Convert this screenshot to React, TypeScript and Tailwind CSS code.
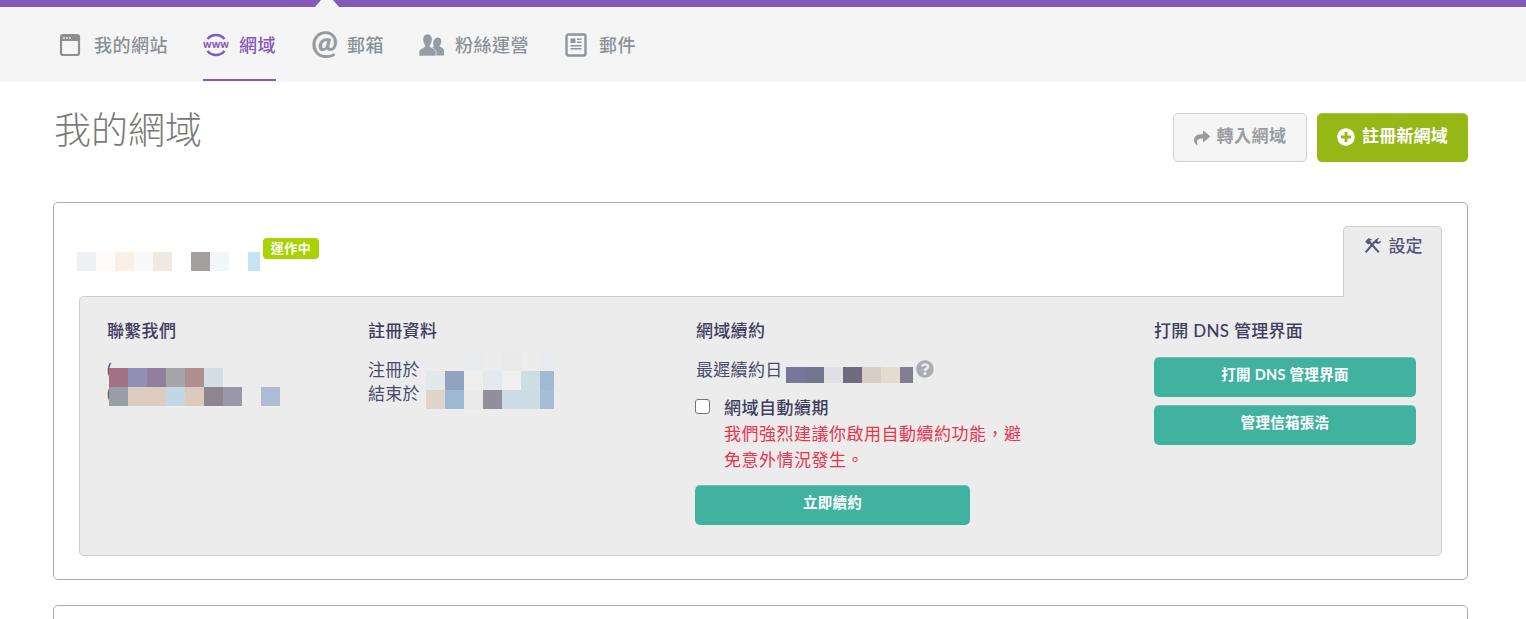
import React from "react";
import { FaShare, FaPlusCircle, FaQuestionCircle } from "react-icons/fa";

const FONT = { fontFamily: '"Lato","Noto Sans CJK TC","Noto Sans",sans-serif' };

function Mosaic({ colors, w = 19, h = 19, lastW }: { colors: (string | null)[]; w?: number; h?: number; lastW?: number }) {
  return (
    <div className="flex">
      {colors.map((c, i) => (
        <div key={i} style={{ width: i === colors.length - 1 && lastW ? lastW : w, height: h, background: c ?? "transparent" }} />
      ))}
    </div>
  );
}

function WindowIcon() {
  return (
    <svg width="22" height="24" viewBox="0 0 22 24" className="shrink-0">
      <rect x="2" y="2" width="18" height="20" rx="2" fill="none" stroke="#8f8f8f" strokeWidth="2.2" />
      <rect x="2" y="2" width="18" height="6" rx="1.5" fill="#8f8f8f" />
      <circle cx="5" cy="5" r="0.9" fill="#f5f5f5" />
      <circle cx="8" cy="5" r="0.9" fill="#f5f5f5" />
      <circle cx="11" cy="5" r="0.9" fill="#f5f5f5" />
    </svg>
  );
}

function WwwIcon() {
  return (
    <svg width="26" height="26" viewBox="0 0 26 26" className="shrink-0">
      <path d="M4.500 7 A11 11 0 0 1 21.500 7" fill="none" stroke="#8459b8" strokeWidth="2.400" />
      <path d="M4.500 19 A11 11 0 0 0 21.500 19" fill="none" stroke="#8459b8" strokeWidth="2.400" />
      <text x="13" y="16" textAnchor="middle" fontSize="11" fontWeight="900" textLength="26" lengthAdjust="spacingAndGlyphs" fill="#8459b8" fontFamily="Lato, sans-serif">www</text>
    </svg>
  );
}

function PeopleIcon() {
  return (
    <svg width="25" height="24" viewBox="0 0 25 24" className="shrink-0">
      <path d="M19 4.500c2 0 3.300 1.700 3.300 3.900 0 1.700-.7 3.100-1.600 4 0 .9.300 1.300 1.300 1.800 1.600.8 2.900 1.500 3 3v5.300h-8.500v-3.500c0-2-1.400-3-3-3.800 0-1 .8-1.300 1.300-2.100-.5-1-.7-1.800-.7-2.800 0-3.100 2.600-5.800 4.900-5.800z" fill="#979ca3" />
      <path d="M8.500 1c2.800 0 4.600 2.400 4.600 5.500 0 2.500-.9 4.600-2.100 5.800 0 1.300.4 1.900 1.800 2.500 2.200 1 4.200 2 4.200 4.200v4H0v-4c0-2.200 2-3.200 4.200-4.200 1.400-.6 1.800-1.200 1.800-2.500-1.200-1.200-2.100-3.300-2.100-5.800 0-3.100 1.800-5.500 4.600-5.500z" fill="#979ca3" stroke="#f5f5f5" strokeWidth="0.6" />
    </svg>
  );
}

function NewsIcon() {
  return (
    <svg width="22" height="24" viewBox="0 0 22 24" className="shrink-0">
      <rect x="1.500" y="1.500" width="19" height="21" rx="2" fill="none" stroke="#8e949b" strokeWidth="2.400" />
      <rect x="5.500" y="5.500" width="5" height="4.500" fill="#8e949b" />
      <rect x="12" y="5.500" width="4.500" height="1.500" fill="#8e949b" />
      <rect x="12" y="8.500" width="4.500" height="1.500" fill="#8e949b" />
      <rect x="5.500" y="12" width="11" height="1.500" fill="#8e949b" />
      <rect x="5.500" y="15" width="11" height="1.500" fill="#8e949b" />
    </svg>
  );
}

function ToolsIcon() {
  return (
    <svg width="19" height="17" viewBox="0 0 18 16" className="shrink-0">
      <path d="M2.500 14.500 L11.500 4" stroke="#56557a" strokeWidth="2" fill="none" />
      <path d="M11.500 5.500 C10.500 3 12.500 .8 15.500 1.200 L13.500 3 L14.500 4.700 L17 3.500 C17.200 6 14.500 7.500 11.500 5.500z" fill="#56557a" />
      <path d="M15 14.500 L6 4.500" stroke="#56557a" strokeWidth="2" fill="none" />
      <path d="M2 4.200 L5.500 .8 L9 2.800 L6.500 3.300 L7 5.500 L5 7z" fill="#56557a" />
    </svg>
  );
}

function NavItem({ icon, label, active, gap }: { icon: React.ReactNode; label: string; active?: boolean; gap: string }) {
  return (
    <div className={`flex h-[74px] items-center border-b-2 pt-[4px] ${gap} ${active ? "border-[#8459b8] text-[#8459b8]" : "border-transparent text-[#8b9096]"}`}>
      {icon}
      <span className="text-[18px] font-medium tracking-[0.5px]">{label}</span>
    </div>
  );
}

function TealButton({ children, className = "" }: { children: React.ReactNode; className?: string }) {
  return (
    <button className={`flex h-10 items-center justify-center rounded-[5px] bg-[#41b1a0] pb-[4px] text-[14.5px] font-bold text-white shadow-[inset_0_1px_0_rgba(255,255,255,0.25)] ${className}`}>
      {children}
    </button>
  );
}

const H3 = "text-[17px] font-medium text-[#3f3e60]";

export default function App() {
  return (
    <div lang="zh-Hant" style={FONT} className="h-[619px] overflow-hidden bg-white">
      <div className="relative h-[7px] bg-[#8459b8]">
        <svg width="26" height="7" viewBox="0 0 26 7" className="absolute left-[314px] top-0">
          <polygon points="7,0 19,0 25,7 1,7" fill="#f5f5f5" />
        </svg>
      </div>

      <nav className="flex h-[75px] items-start gap-[35px] bg-[#f5f5f5] pl-[59px]">
        <NavItem icon={<WindowIcon />} label="我的網站" gap="gap-[13px]" />
        <NavItem icon={<WwwIcon />} label="網域" active gap="gap-[10px]" />
        <NavItem
          icon={<span className="mt-[-6px] w-[26px] text-center text-[32px] font-black leading-none text-[#979ca3]">@</span>}
          label="郵箱"
          gap="gap-[10px]"
        />
        <NavItem icon={<PeopleIcon />} label="粉絲運營" gap="gap-[11px]" />
        <div className="ml-[1px]">
          <NavItem icon={<NewsIcon />} label="郵件" gap="gap-[12px]" />
        </div>
      </nav>

      <main className="pl-[53px] pr-[58px]">
        <header className="flex items-start justify-between pt-[31px]">
          <h1 className="pl-px text-[37px] font-light leading-[34px] text-[#7a7a7a]">我的網域</h1>
          <div className="flex gap-[10px]">
            <button className="flex h-[49px] w-[134px] items-center justify-center gap-[7px] rounded-[5px] border border-[#cfcfcf] bg-[#f5f5f5] pb-[3px] text-[17px] font-bold tracking-[0.5px] text-[#9a9da1]">
              <FaShare className="mt-[3px] text-[16px] text-[#9a9a9a]" />
              轉入網域
            </button>
            <button className="flex h-[49px] w-[151px] items-center justify-center gap-[7px] rounded-[5px] bg-[#95b816] pb-[3px] text-[17px] font-bold tracking-[0.2px] text-white shadow-[inset_0_1px_0_rgba(255,255,255,0.2)]">
              <FaPlusCircle className="mt-[2px] text-[18px]" />
              註冊新網域
            </button>
          </div>
        </header>

        <section className="mt-[40px] h-[378px] rounded-[5px] border border-[#aaaaaa] px-[25px] pt-[23px]">
          <div className="flex h-[70px] items-start justify-between">
            <div className="flex items-start">
              <div className="-ml-[2px] mt-[26px]">
                <Mosaic colors={["#eef0f4", "#fffbf8", "#fbefe5", "#f9f9f9", "#f0e9e0", null, "#a39f9f", "#f3f6f8", null]} />
              </div>
              <div className="mt-[26px] h-[19px] w-[12px] bg-[#c6e3f4]" />
              <span className="ml-[3px] mt-[12px] flex h-[21px] w-[56px] items-center justify-center rounded-[4px] bg-[#a9d300] text-[13px] font-bold tracking-[0.5px] text-white">
                運作中
              </span>
            </div>
            <div className="relative z-10 flex h-[71px] w-[99px] items-start justify-center gap-[7px] rounded-t-[5px] border border-b-0 border-[#cccccc] bg-[#ececec] pt-[6px] text-[17px] font-medium text-[#55547a]">
              <span className="mt-[4px]"><ToolsIcon /></span>
              設定
            </div>
          </div>

          <div className="relative grid h-[260px] grid-cols-[261px_328px_458px_262px] rounded-b-[5px] rounded-tl-[5px] border border-[#cccccc] bg-[#ececec] pl-[27px] pt-[22px] text-[17px] leading-[24px] tracking-[0.3px] text-[#4b4a6c]">
            <div>
              <h3 className={H3}>聯繫我們</h3>
              <div className="relative mt-[15px]">
                <div>(</div>
                <div>(</div>
                <div className="absolute left-[2px] top-[10px]">
                  <Mosaic colors={["#a07284", "#8f90b5", "#917f9f", "#a6a5aa", "#ad8f8e", "#d3dde5"]} />
                  <Mosaic colors={["#9a9ca6", "#dccbbf", "#dccbbf", "#c3d6e4", "#dccabd", "#8e868f", "#9a98a8", null, "#adbcd3"]} />
                </div>
              </div>
            </div>

            <div>
              <h3 className={H3}>註冊資料</h3>
              <div className="relative mt-[15px]">
                <div>注冊於</div>
                <div>結束於</div>
                <div className="absolute left-[58px] -top-[6px]">
                  <Mosaic lastW={14} colors={[null, null, "#e8ecee", null, "#e9e9e9", null, "#e9ebef"]} />
                  <Mosaic lastW={14} colors={["#e3e9e8", "#90a3c0", "#efeeed", "#e5e8ed", "#f0f0f0", "#cddde4", "#9fbbd4"]} />
                  <Mosaic lastW={14} colors={["#ddd5c9", "#9fb9d3", "#e9e9e9", "#928e9b", "#ccdbe6", "#cddce3", "#a5bdd6"]} />
                </div>
              </div>
            </div>

            <div className="pr-[120px]">
              <h3 className={H3}>網域續約</h3>
              <div className="mt-[15px] flex h-[24px] items-start">
                <span>最遲續約日</span>
                <div className="ml-[3px] mt-[9px]">
                  <Mosaic h={16} colors={["#76779a", "#74758f", "#e0e0e4", "#6f6a7d", "#d8cdc5", "#e6dbd0"]} />
                </div>
                <div className="mt-[9px] h-4 w-[13px] bg-[#817d94]" />
                <FaQuestionCircle className="ml-[3px] mt-[2px] text-[18px] text-[#a9adb1]" />
              </div>
              <label className="mt-[13px] flex items-start">
                <input type="checkbox" className="ml-[-1px] mt-[4px] h-[15px] w-[15px] shrink-0 appearance-none rounded-[3px] border border-[#767676] bg-white" />
                <span className="ml-[14px] text-[17px] font-medium leading-[26px] tracking-[0.5px] text-[#3f3e60]">
                  網域自動續期
                  <span className="block w-[300px] font-normal text-[#e8344e]">我們強烈建議你啟用自動續約功能，避免意外情況發生。</span>
                </span>
              </label>
              <TealButton className="mt-[12px] ml-[-1px] w-[275px]">立即續約</TealButton>
            </div>

            <div>
              <h3 className={H3}>打開 DNS 管理界面</h3>
              <TealButton className="mt-[14px] w-full">打開 DNS 管理界面</TealButton>
              <TealButton className="mt-2 w-full">管理信箱張浩</TealButton>
            </div>
          </div>
        </section>

        <section className="mt-[25px] h-[60px] rounded-[5px] border border-[#aaaaaa]" />
      </main>
    </div>
  );
}
